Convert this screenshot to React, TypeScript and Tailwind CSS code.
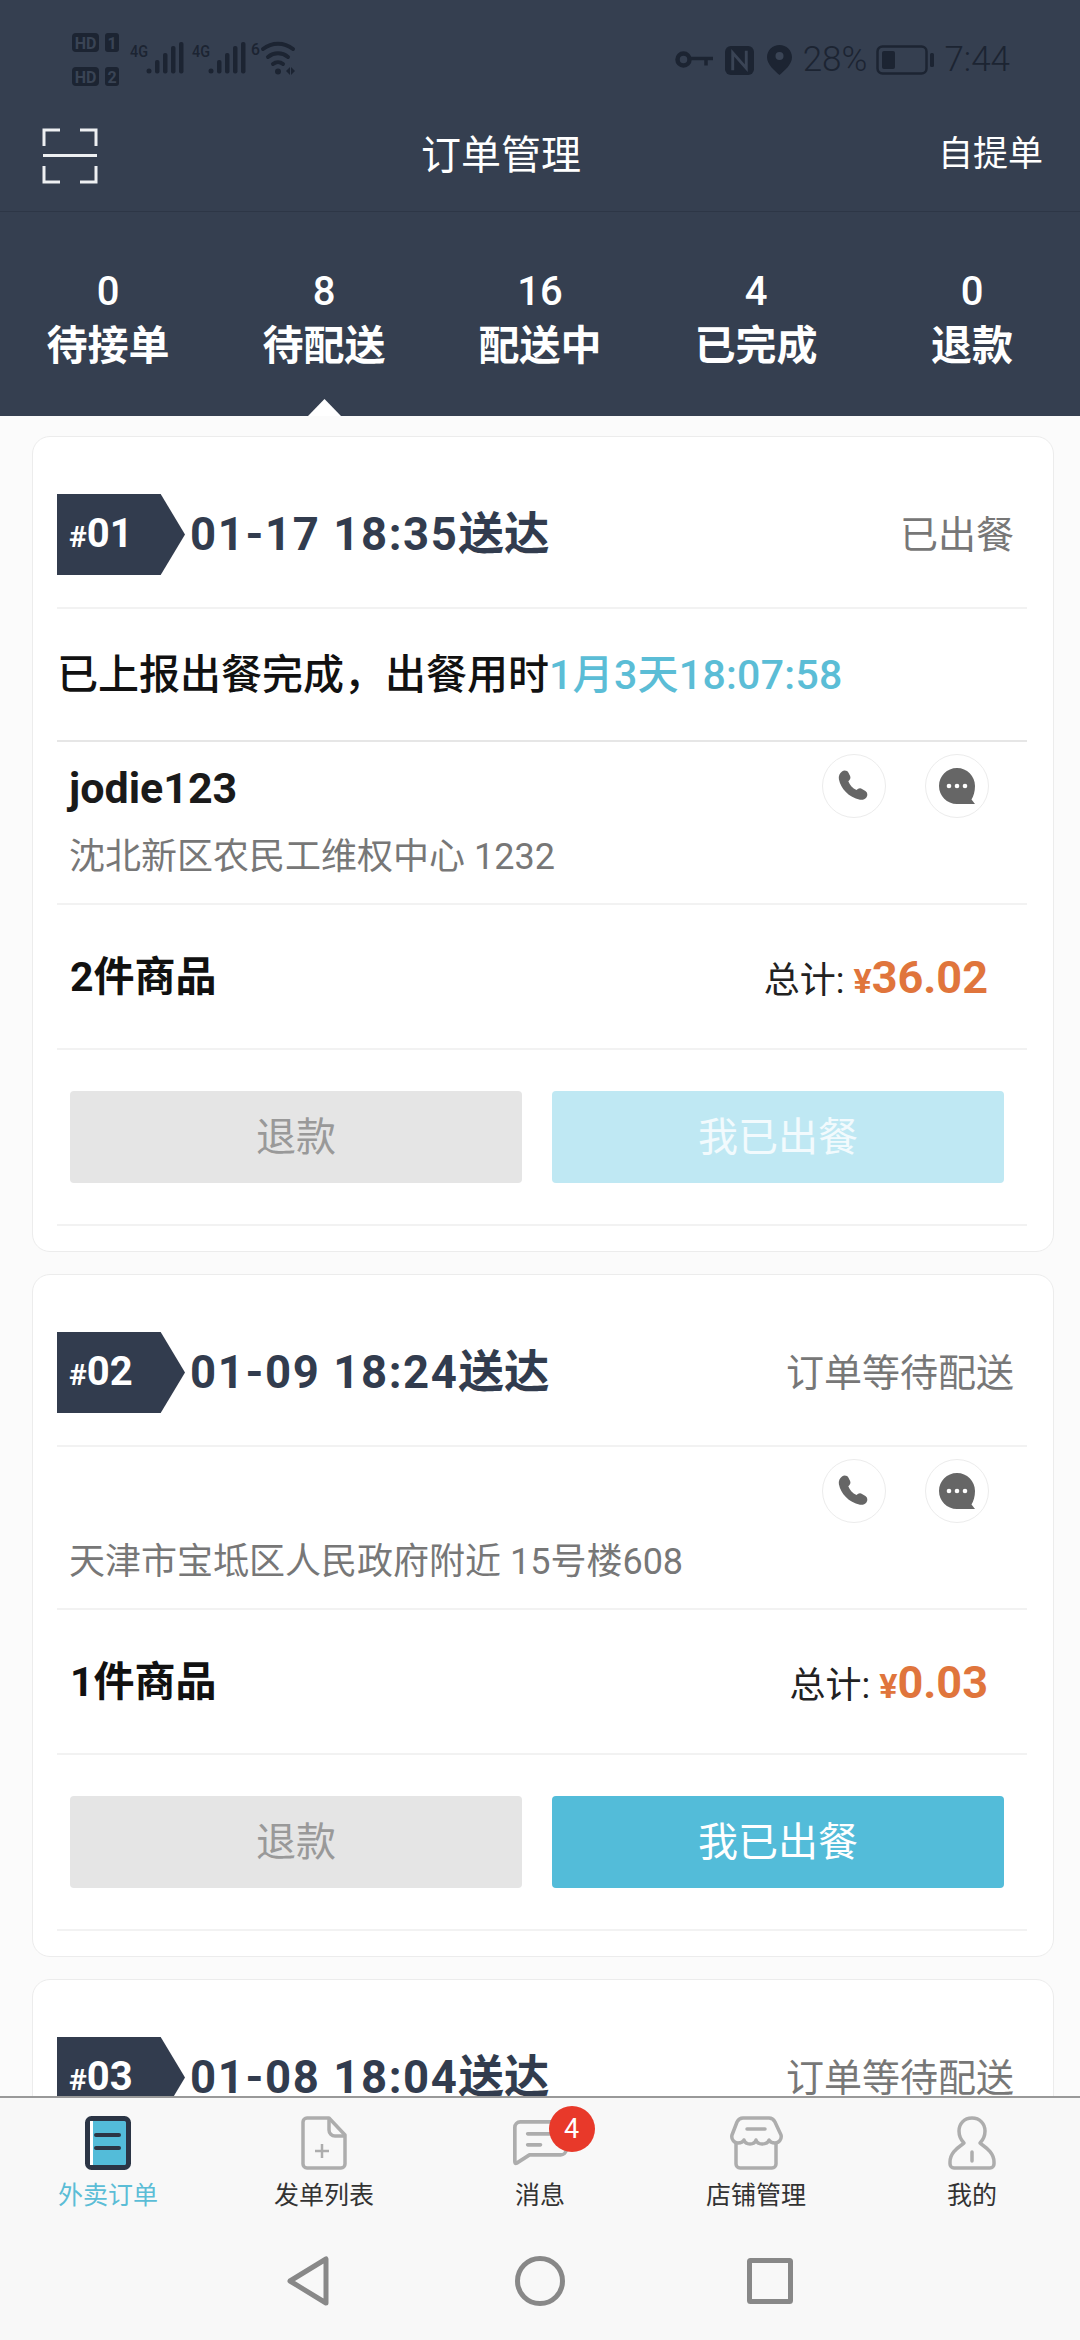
import React from "react";

const FONT = "font-['Roboto','Noto_Sans_CJK_SC',sans-serif]";

function Phone() {
  return (
    <svg width="36" height="36" viewBox="0 0 36 36" fill="#666">
      <path d="M6 3.500c2.200-1.600 5.400-1 6.600 1.400l1.500 3.200c.7 1.500.3 3.200-.8 4.200l-1 .9c1.600 4 4.200 6.900 8.200 8.900l1.300-1c1.200-.9 2.900-1 4.200-.2l3.400 2.100c2.200 1.400 2.600 4.400 1 6.400-1.500 1.900-4 2.900-6.500 2.300C12.700 29.300 4.700 20.400 2.900 11.200 2.300 8.200 3.700 5.200 6 3.500z" />
    </svg>
  );
}

function Chat() {
  return (
    <svg width="38" height="38" viewBox="0 0 38 38">
      <path d="M19 1C9 1 1 9 1 19s8 18 18 18h18l-3.500-4.500C35.600 29.400 37 24.400 37 19 37 9 29 1 19 1z" fill="#666" />
      <circle cx="11" cy="19" r="2.300" fill="#fff" />
      <circle cx="19" cy="19" r="2.300" fill="#fff" />
      <circle cx="27" cy="19" r="2.300" fill="#fff" />
    </svg>
  );
}

function Round({ children }: { children: React.ReactNode }) {
  return (
    <div className="w-[64px] h-[64px] rounded-full border border-[#ececec] bg-white flex items-center justify-center">
      {children}
    </div>
  );
}

function Card(p: {
  n: string;
  date: string;
  status: string;
  message?: React.ReactNode;
  name?: string;
  address: string;
  goods: string;
  price: string;
  disabled?: boolean;
}) {
  return (
    <div className="bg-white border border-[#ececec] rounded-[18px] pl-[24px] pr-[26px] pb-[25px] shrink-0">
      <div className="flex items-center pt-[57px] pb-[32px] border-b-2 border-[#f2f2f2] pr-[13px]">
        <div className="w-[128px] h-[81px] bg-[#323c4e] text-white font-bold text-[40px] leading-[80px] pl-[12px] shrink-0 [clip-path:polygon(0_0,81%_0,100%_50%,81%_100%,0_100%)]">
          <span className="text-[30px]">#</span>
          {p.n}
        </div>
        <div className="ml-[5px] text-[#323c4e] font-bold text-[45.500px] leading-[60px] whitespace-nowrap">
          <span className="tracking-[1.600px]">{p.date}</span>
          <span>送达</span>
        </div>
        <div className="ml-auto text-[38px] leading-[50px] text-[#777]">{p.status}</div>
      </div>
      {p.message && (
        <div className="h-[133px] pt-[3px] flex items-center border-b-2 border-[#e6e6e6] text-[41px] font-medium text-[#111] whitespace-nowrap">
          {p.message}
        </div>
      )}
      <div className="h-[163px] relative pl-[12px] pt-[22px] border-b-2 border-[#f2f2f2]">
        <div className="h-[48px] text-[43px] leading-[48px] font-bold text-[#1a1a1a]">{p.name}</div>
        <div className="mt-[21px] text-[36px] leading-[48px] text-[#777] whitespace-nowrap">{p.address}</div>
        <div className="absolute top-[12px] right-[38px] flex gap-[39px]">
          <Round>
            <Phone />
          </Round>
          <Round>
            <Chat />
          </Round>
        </div>
      </div>
      <div className="h-[145px] pt-[3px] flex items-center justify-between pl-[13px] pr-[39px] border-b-2 border-[#f2f2f2]">
        <div className="text-[41px] font-bold text-[#111]">{p.goods}</div>
        <div className="flex items-baseline text-[36px] text-[#222]">
          <span>总计:&nbsp;</span>
          <span className="text-[#e0753c] font-bold text-[34px]">¥</span>
          <span className="text-[#e0753c] font-bold text-[45px]">{p.price}</span>
        </div>
      </div>
      <div className="h-[176px] pt-[41px] pl-[13px] border-b-2 border-[#f2f2f2] flex gap-[30px]">
        <div className="w-[452px] h-[92px] pt-[2px] rounded-[4px] bg-[#e5e5e5] text-[#999] text-[40px] flex items-center justify-center">
          退款
        </div>
        <div
          className={
            p.disabled
              ? "w-[452px] h-[92px] pt-[2px] rounded-[4px] bg-[#bfe8f3] text-white/80 text-[40px] flex items-center justify-center"
              : "w-[452px] h-[92px] pt-[2px] rounded-[4px] bg-[#53bcd9] text-white text-[40px] flex items-center justify-center"
          }
        >
          我已出餐
        </div>
      </div>
    </div>
  );
}

function StatusLeft() {
  const c = "#1c2432";
  const bars = (x: number) => (
    <g fill={c}>
      <circle cx={x} cy="38" r="2.500" />
      <rect x={x + 6} y="27" width="4.500" height="13.500" rx="2" />
      <rect x={x + 14} y="20" width="4.500" height="20.500" rx="2" />
      <rect x={x + 22} y="13" width="4.500" height="27.500" rx="2" />
      <rect x={x + 30} y="9" width="4.500" height="31.500" rx="2" />
    </g>
  );
  return (
    <svg width="226" height="54" viewBox="0 0 226 54">
      <rect x="0" y="0" width="27" height="19" rx="4" fill={c} />
      <rect x="33" y="0" width="14" height="19" rx="3" fill={c} />
      <rect x="0" y="34" width="27" height="19" rx="4" fill={c} />
      <rect x="33" y="34" width="14" height="19" rx="3" fill={c} />
      <g fontFamily="Roboto" fontWeight="700" fontSize="16" fill="#3a4455" textAnchor="middle">
        <text x="13.500" y="15.500">HD</text>
        <text x="40" y="15.500">1</text>
        <text x="13.500" y="49.500">HD</text>
        <text x="40" y="49.500">2</text>
      </g>
      <g fontFamily="Roboto" fontWeight="500" fontSize="17" fill={c}>
        <text x="58" y="24" textLength="18" lengthAdjust="spacingAndGlyphs">4G</text>
        <text x="120" y="24" textLength="18" lengthAdjust="spacingAndGlyphs">4G</text>
        <text x="179" y="22" textLength="9" lengthAdjust="spacingAndGlyphs">6</text>
      </g>
      {bars(77)}
      {bars(139)}
      <g fill="none" stroke={c} strokeWidth="4" strokeLinecap="round">
        <path d="M191 16c9-7 21-7 30 0" />
        <path d="M196 24c6-5 14-5 20 0" />
        <path d="M201 31c3-2.500 7-2.500 10 0" />
      </g>
      <circle cx="206" cy="38.500" r="3" fill={c} />
      <path d="M214 38l4-4v8zM219 34l4 4-4 4z" fill={c} />
    </svg>
  );
}

function Key() {
  return (
    <svg width="38" height="20" viewBox="0 0 38 20" fill="none" stroke="#1c2432">
      <circle cx="8.500" cy="9.500" r="6" strokeWidth="4.500" />
      <path d="M15 8.500h23M31 8.500v7" strokeWidth="3.500" />
    </svg>
  );
}

function Nfc() {
  return (
    <svg width="29" height="29" viewBox="0 0 30 30">
      <rect x="0" y="0" width="30" height="30" rx="6" fill="#1c2432" />
      <path d="M8 25V7l14 16V5" fill="none" stroke="#3a4455" strokeWidth="3" />
    </svg>
  );
}

function Pin() {
  return (
    <svg width="25" height="30" viewBox="0 0 25 30">
      <path d="M12.500 0C5.600 0 0 5.400 0 12.200 0 19.500 8 26 12.500 30 17 26 25 19.500 25 12.200 25 5.400 19.400 0 12.500 0z" fill="#1c2432" />
      <circle cx="12.500" cy="11" r="4" fill="#3a4455" />
    </svg>
  );
}

function Battery() {
  return (
    <svg width="58" height="30" viewBox="0 0 58 30">
      <rect x="1.500" y="1.500" width="49" height="27" rx="5" fill="none" stroke="#1c2432" strokeWidth="2.500" />
      <rect x="6" y="6" width="13" height="18" rx="2" fill="#1c2432" />
      <rect x="54" y="8" width="4" height="14" rx="1.500" fill="#1c2432" />
    </svg>
  );
}

function Bracket() {
  return (
    <svg width="56" height="56" viewBox="0 0 56 56" fill="none" stroke="#eef0f2" strokeWidth="3" className="shrink-0">
      <path d="M18 2H2v16M38 2h16v16M18 54H2V38M38 54h16V38" />
      <path d="M1 27.500h54" />
    </svg>
  );
}

const G = "#adadad";

function NavOrders() {
  return (
    <svg width="46" height="54" viewBox="0 0 46 54">
      <rect x="2.500" y="2.500" width="41" height="49" rx="4" fill="#53bcd9" stroke="#2b3545" strokeWidth="5" />
      <rect x="5" y="5" width="3" height="44" fill="#fff" />
      <path d="M11 19h23M11 32h23" stroke="#2b3545" strokeWidth="4" strokeLinecap="round" />
    </svg>
  );
}

function NavFile() {
  return (
    <svg width="46" height="54" viewBox="0 0 46 54" fill="none" stroke={G} strokeWidth="3.500" strokeLinejoin="round">
      <path d="M6 2h22l16 17v29a4 4 0 0 1-4 4H6a4 4 0 0 1-4-4V6a4 4 0 0 1 4-4z" />
      <path d="M28 3v11a6 6 0 0 0 6 6h10" />
      <path d="M14 35h14M21 28v14" strokeWidth="2.500" />
    </svg>
  );
}

function NavMsg() {
  return (
    <svg width="55" height="48" viewBox="0 0 60 50" fill="none" stroke={G} strokeWidth="4" strokeLinejoin="round">
      <path d="M8 2h44a6 6 0 0 1 6 6v24a6 6 0 0 1-6 6H18L4 47q-2 1-2-2V8a6 6 0 0 1 6-6z" />
      <path d="M16 15h26M16 27h14" strokeLinecap="round" />
    </svg>
  );
}

function NavStore() {
  return (
    <svg width="54" height="54" viewBox="0 0 54 54" fill="none" stroke={G} strokeWidth="3.500" strokeLinejoin="round">
      <path d="M14 2h26c3 0 5 2 6 4l6 13c1 4-2 8-6 8-3 0-5-1-6-3-1 3-4 4-7 4s-5-1-6-4c-1 3-4 4-6 4-3 0-5-1-6-4-1 2-3 3-6 3-4 0-7-4-6-8L8 6c1-2 3-4 6-4z" />
      <path d="M7 27v21a4 4 0 0 0 4 4h32a4 4 0 0 0 4-4V27" />
      <path d="M18 13h18" strokeLinecap="round" />
    </svg>
  );
}

function NavUser() {
  return (
    <svg width="48" height="54" viewBox="0 0 48 54" fill="none" stroke={G} strokeWidth="3.500" strokeLinejoin="round">
      <path d="M24 2c8 0 13 6 13 13 0 5-2 9-5 12 3 3 14 8 14 19v2a4 4 0 0 1-4 4H6a4 4 0 0 1-4-4v-2c0-11 11-16 14-19-3-3-5-7-5-12C11 8 16 2 24 2z" />
      <path d="M24 36v9" strokeLinecap="round" />
    </svg>
  );
}

function NavItem({ icon, label, active, badge }: { icon: React.ReactNode; label: string; active?: boolean; badge?: string }) {
  return (
    <div className="flex flex-col items-center relative">
      <div className="h-[54px] flex items-center justify-center relative">
        {icon}
        {badge && (
          <div className="absolute -top-[10px] left-[36px] w-[46px] h-[46px] rounded-full bg-[#e8392a] text-white text-[27px] flex items-center justify-center">
            {badge}
          </div>
        )}
      </div>
      <div className={active ? "mt-[9px] text-[25px] leading-[34px] text-[#5bbdd6]" : "mt-[9px] text-[25px] leading-[34px] text-[#333]"}>
        {label}
      </div>
    </div>
  );
}

const tabs = [
  ["0", "待接单"],
  ["8", "待配送"],
  ["16", "配送中"],
  ["4", "已完成"],
  ["0", "退款"],
];

export default function App() {
  return (
    <div className={`${FONT} w-[1080px] h-[2340px] flex flex-col overflow-hidden bg-[#fbfbfb]`}>
      <div className="bg-[#353f50] shrink-0 h-[416px] flex flex-col relative">
        <div className="h-[100px] shrink-0 flex pl-[72px] pr-[70px] justify-between">
          <div className="pt-[33px]">
            <StatusLeft />
          </div>
          <div className="flex items-center h-[120px] text-[#1c2432] text-[35px] font-light">
            <Key />
            <span className="w-[12px]" />
            <Nfc />
            <span className="w-[13px]" />
            <Pin />
            <span className="w-[11px]" />
            <span>28%</span>
            <span className="w-[9px]" />
            <Battery />
            <span className="w-[10px]" />
            <span>7:44</span>
          </div>
        </div>
        <div className="h-[112px] shrink-0 flex items-center justify-between border-b border-[#2d3646] pl-[42px] pr-[37px]">
          <Bracket />
          <div className="ml-[323px] text-[40px] text-white">订单管理</div>
          <div className="ml-auto text-[35px] text-white">自提单</div>
        </div>
        <div className="grid grid-cols-5 pt-[57px]">
          {tabs.map(([n, l], i) => (
            <div key={i} className="flex flex-col items-center text-white">
              <div className="text-[40px] leading-[46px] font-medium">{n}</div>
              <div className="text-[41px] leading-[56px] font-bold mt-[3px]">{l}</div>
            </div>
          ))}
        </div>
        <div className="absolute left-[308px] bottom-0 w-[33px] h-[17px] bg-white [clip-path:polygon(50%_0,100%_100%,0_100%)]" />
      </div>

      <div className="flex-1 min-h-0 overflow-hidden pl-[32px] pr-[26px] pt-[20px] flex flex-col gap-[22px]">
        <Card
          n="01"
          date="01-17 18:35"
          status="已出餐"
          message={
            <>
              已上报出餐完成，出餐用时<span className="text-[#5bbdd6] tracking-[0.3px]">1月3天18:07:58</span>
            </>
          }
          name="jodie123"
          address="沈北新区农民工维权中心 1232"
          goods="2件商品"
          price="36.02"
          disabled
        />
        <Card
          n="02"
          date="01-09 18:24"
          status="订单等待配送"
          address="天津市宝坻区人民政府附近 15号楼608"
          goods="1件商品"
          price="0.03"
        />
        <Card n="03" date="01-08 18:04" status="订单等待配送" address="" goods="" price="" />
      </div>

      <div className="h-[244px] shrink-0 bg-[#f8f8f8] border-t-2 border-[#999]">
        <div className="grid grid-cols-5 pt-[18px]">
          <NavItem icon={<NavOrders />} label="外卖订单" active />
          <NavItem icon={<NavFile />} label="发单列表" />
          <NavItem icon={<NavMsg />} label="消息" badge="4" />
          <NavItem icon={<NavStore />} label="店铺管理" />
          <NavItem icon={<NavUser />} label="我的" />
        </div>
        <div className="flex items-center justify-center mt-[43px]">
          <svg width="42" height="50" viewBox="0 0 42 50" fill="none" stroke="#888" strokeWidth="5" strokeLinejoin="round">
            <path d="M39 3v44L3 25z" />
          </svg>
          <svg width="50" height="50" viewBox="0 0 50 50" fill="none" stroke="#888" strokeWidth="5" className="ml-[186px] mr-[182px]">
            <circle cx="25" cy="25" r="22.500" />
          </svg>
          <svg width="46" height="46" viewBox="0 0 46 46" fill="none" stroke="#888" strokeWidth="5" strokeLinejoin="round">
            <rect x="2.500" y="2.500" width="41" height="41" rx="1" />
          </svg>
        </div>
      </div>
    </div>
  );
}
